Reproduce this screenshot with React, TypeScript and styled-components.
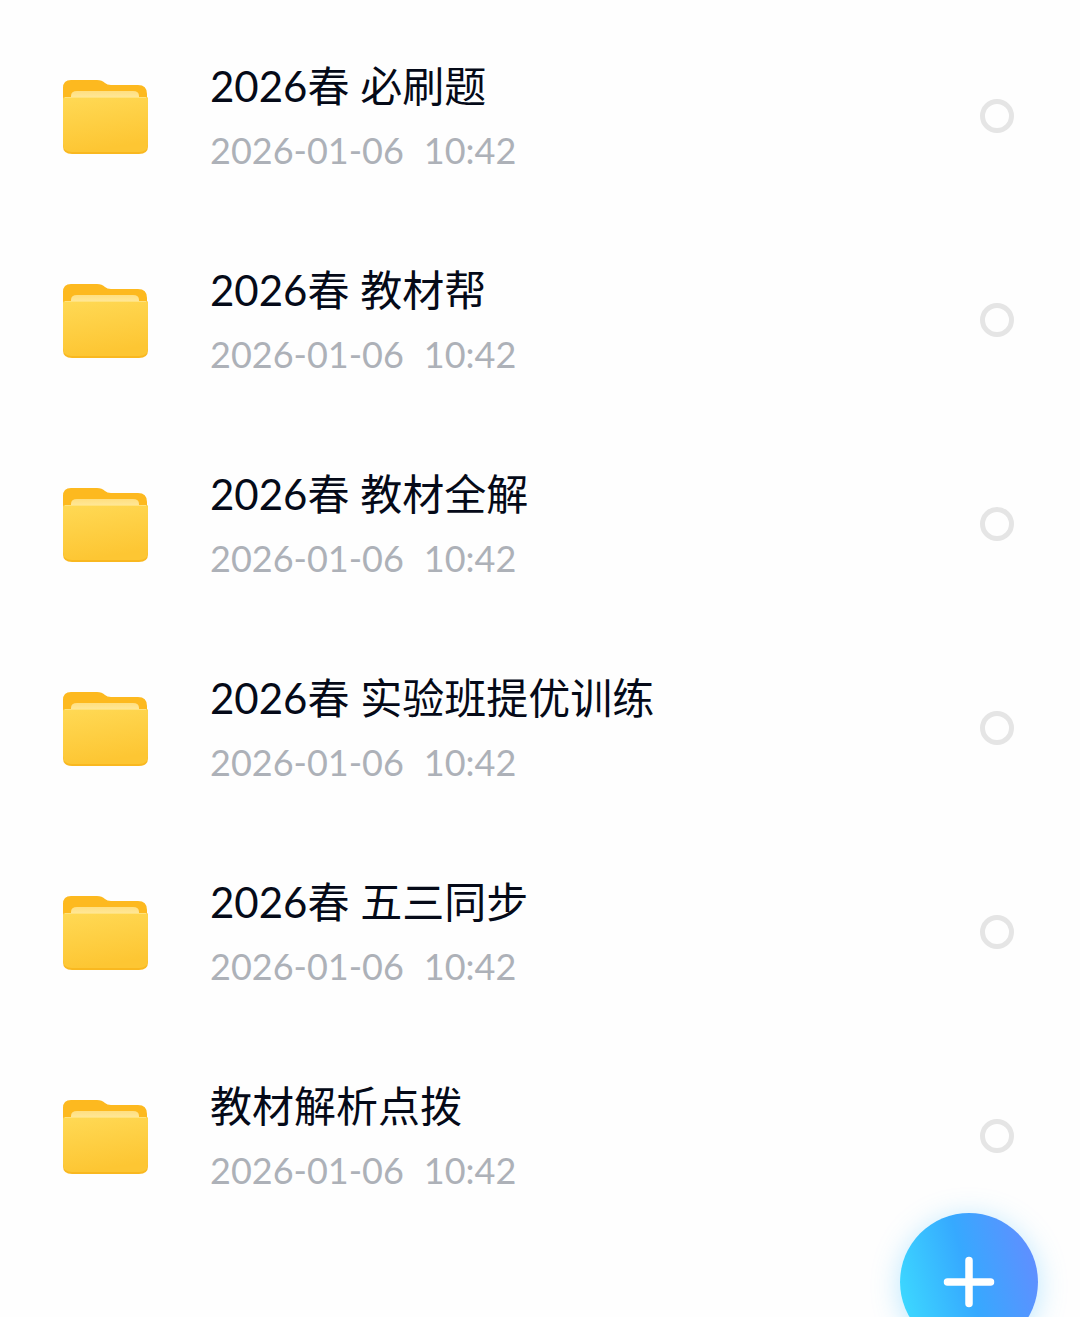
import React, { useState } from "react";
import styled, { createGlobalStyle } from "styled-components";

const GlobalStyle = createGlobalStyle`
  *, *::before, *::after { box-sizing: border-box; }
  body {
    margin: 0;
    background: #fefefe;
    font-family: Lato, "Noto Sans CJK SC", sans-serif;
  }
`;

const Screen = styled.main`
  min-height: 100vh;
  padding: 14px 0 80px;
  overflow: hidden;
`;

const List = styled.ul`
  margin: 0;
  padding: 0;
  list-style: none;
`;

const Row = styled.label`
  display: flex;
  align-items: center;
  height: 204px;
  padding: 0 66px 0 60px;
  cursor: pointer;
`;

const FolderIcon = styled.svg`
  flex: none;
  width: 90px;
  height: 80px;
`;

const Details = styled.span`
  display: flex;
  flex: 1;
  flex-direction: column;
  gap: 14px;
  min-width: 0;
  padding: 2px 24px 0 60px;
`;

const Name = styled.span`
  overflow: hidden;
  color: #050a18;
  font-size: 42px;
  line-height: 52px;
  text-overflow: ellipsis;
  white-space: nowrap;
`;

const Modified = styled.span`
  display: flex;
  gap: 20px;
  color: #adb1b8;
  font-size: 36px;
  line-height: 48px;
`;

const Check = styled.input`
  flex: none;
  width: 34px;
  height: 34px;
  margin: 0;
  border: 5px solid #e5e5e5;
  border-radius: 50%;
  appearance: none;
  cursor: pointer;

  &:checked {
    border-color: #3a9dff;
    background: #3a9dff;
    box-shadow: inset 0 0 0 4px #fff;
  }
`;

const AddButton = styled.button`
  position: fixed;
  right: 42px;
  bottom: -34px;
  display: grid;
  place-items: center;
  width: 138px;
  height: 138px;
  padding: 0;
  border: 0;
  border-radius: 50%;
  background: linear-gradient(75deg, #3ddcff 4%, #36a9ff 50%, #648cff 96%);
  box-shadow: 0 4px 28px rgba(70, 190, 255, 0.36);
  cursor: pointer;
`;

const folders = [
  "2026春 必刷题",
  "2026春 教材帮",
  "2026春 教材全解",
  "2026春 实验班提优训练",
  "2026春 五三同步",
  "教材解析点拨",
].map((name) => ({ name, date: "2026-01-06", time: "10:42" }));

function Folder() {
  return (
    <FolderIcon viewBox="0 0 90 80" aria-hidden="true">
      <defs>
        <linearGradient id="folder-front" x1="0" y1="0" x2="0.25" y2="1">
          <stop offset="0" stopColor="#ffd955" />
          <stop offset="1" stopColor="#fdc633" />
        </linearGradient>
        <linearGradient id="folder-paper" x1="0" y1="0" x2="0" y2="1">
          <stop offset="0" stopColor="#ffdf80" />
          <stop offset="1" stopColor="#ffe99c" />
        </linearGradient>
      </defs>
      <path
        d="M3 32V12Q3 4 11 4H37Q42 4 45 7Q47 9 51 9H78Q87 9 87 18V32Z"
        fill="#fdb91f"
      />
      <path d="M11 23V20Q11 15 17 15H73Q79 15 79 20V23Z" fill="url(#folder-paper)" />
      <path d="M3 23Q3 21 5 21H86Q88 21 88 23V70Q88 78 79 78H12Q3 78 3 70Z" fill="#f9b820" />
      <path d="M3 23Q3 21 5 21H86Q88 21 88 23V68Q88 76 79 76H12Q3 76 3 68Z" fill="url(#folder-front)" />
      <path d="M5 21.500H86" stroke="#ffe27c" strokeWidth="1" />
    </FolderIcon>
  );
}

export default function App() {
  const [selected, setSelected] = useState<string[]>([]);

  const toggle = (name: string) =>
    setSelected((names) =>
      names.includes(name) ? names.filter((n) => n !== name) : [...names, name],
    );

  return (
    <Screen>
      <GlobalStyle />
      <List>
        {folders.map(({ name, date, time }) => (
          <li key={name}>
            <Row>
              <Folder />
              <Details>
                <Name>{name}</Name>
                <Modified>
                  <span>{date}</span>
                  <span>{time}</span>
                </Modified>
              </Details>
              <Check
                type="checkbox"
                checked={selected.includes(name)}
                onChange={() => toggle(name)}
              />
            </Row>
          </li>
        ))}
      </List>
      <AddButton type="button" aria-label="新建">
        <svg width="52" height="52" viewBox="0 0 52 52" aria-hidden="true">
          <path d="M26 4.500V47.500M4.500 26H47.500" stroke="#fff" strokeWidth="7.500" strokeLinecap="round" />
        </svg>
      </AddButton>
    </Screen>
  );
}
